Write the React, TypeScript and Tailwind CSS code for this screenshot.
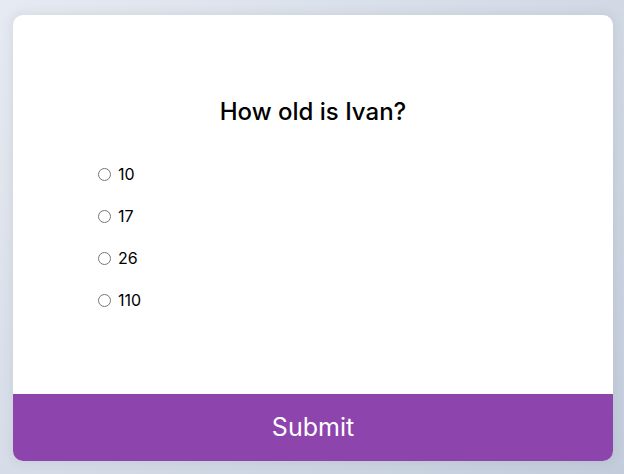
import React from "react";

const answers = ["10", "17", "26", "110"];

export default function App() {
  return (
    <div className="flex h-screen w-full items-center justify-center overflow-hidden bg-[linear-gradient(315deg,#c2ccdb_0%,#e6eaf2_100%)] pt-[2px] pl-[2px] font-['Inter',sans-serif]">
      <div className="flex w-[600px] flex-col overflow-hidden rounded-[10px] bg-white shadow-[0_0_10px_2px_rgba(100,100,100,0.1)]">
        <div className="px-[85px] pt-[81px] pb-[81px]">
          <h2 className="text-center text-[24px] font-medium leading-8 text-black">
            How old is Ivan?
          </h2>
          <ul className="mt-[33px] flex flex-col gap-4">
            {answers.map((a) => (
              <li key={a} className="flex h-[26px] items-center text-[16px] text-black">
                <label className="flex cursor-pointer items-center">
                  <input type="radio" name="answer" className="m-0 mr-[7px] h-[13px] w-[13px]" />
                  {a}
                </label>
              </li>
            ))}
          </ul>
        </div>
        <button className="h-[67px] w-full cursor-pointer bg-[#8e44ad] text-[25px] text-white">
          Submit
        </button>
      </div>
    </div>
  );
}
